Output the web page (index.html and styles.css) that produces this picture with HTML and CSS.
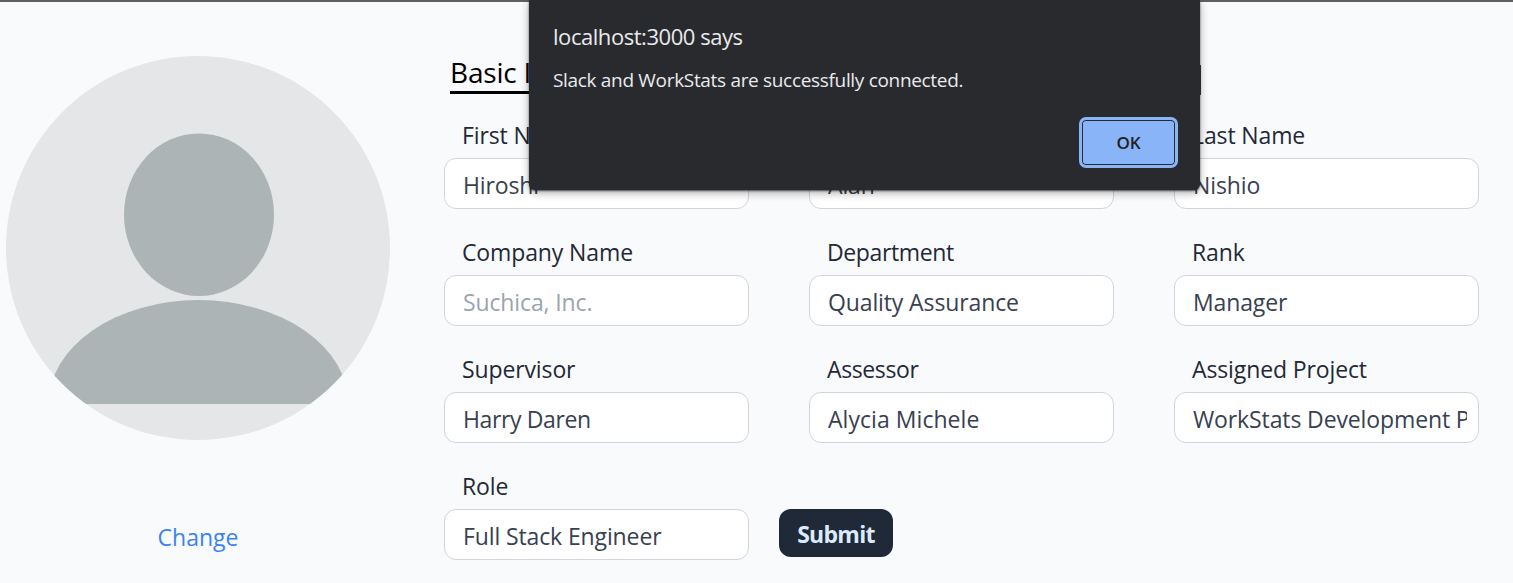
FILE: index.html
```
<!DOCTYPE html>
<html lang="en">
<head>
<meta charset="utf-8">
<title>Profile</title>
<link rel="stylesheet" href="styles.css">
</head>
<body>
<main class="page">
  <aside class="profile">
    <svg class="avatar" viewBox="0 0 384 384" aria-hidden="true">
      <defs><clipPath id="disc"><circle cx="192" cy="192" r="192"/></clipPath></defs>
      <g clip-path="url(#disc)">
        <rect width="384" height="384" fill="#e4e6e7"/>
        <ellipse cx="193" cy="158.700" rx="75" ry="81.300" fill="#acb4b6"/>
        <path d="M42.500 348A150 104 0 0 1 342.500 348Z" fill="#acb4b6"/>
      </g>
    </svg>
    <a class="change">Change</a>
  </aside>
  <section class="details">
    <h2 class="heading">Basic Information</h2>
    <form class="form">
      <div class="row">
        <label class="field"><span class="label">First Name</span><input class="input" value="Hiroshi"></label>
        <label class="field"><span class="label">Middle Name</span><input class="input" value="Alan"></label>
        <label class="field"><span class="label">Last Name</span><input class="input" value="Nishio"></label>
      </div>
      <div class="row">
        <label class="field"><span class="label">Company Name</span><input class="input" placeholder="Suchica, Inc."></label>
        <label class="field"><span class="label tight">Department</span><input class="input" value="Quality Assurance"></label>
        <label class="field"><span class="label">Rank</span><input class="input" value="Manager"></label>
      </div>
      <div class="row">
        <label class="field"><span class="label">Supervisor</span><input class="input tight" value="Harry Daren"></label>
        <label class="field"><span class="label tight">Assessor</span><input class="input loose" value="Alycia Michele"></label>
        <label class="field"><span class="label">Assigned Project</span><input class="input" value="WorkStats Development Project"></label>
      </div>
      <div class="row row-last">
        <label class="field"><span class="label">Role</span><input class="input" value="Full Stack Engineer"></label>
        <button class="submit" type="button">Submit</button>
      </div>
    </form>
  </section>
</main>
<div class="dialog" role="alertdialog">
  <div class="dialog-title">localhost:3000 says</div>
  <div class="dialog-text">Slack and WorkStats are successfully connected.</div>
  <button class="ok" type="button">OK</button>
</div>
</body>
</html>
```
FILE: styles.css
```
* { box-sizing: border-box; }
body {
  margin: 0;
  height: 583px;
  overflow: hidden;
  background: #f9fafc;
  color: #1f2937;
  font-family: "Open Sans", "Noto Sans", sans-serif;
  font-size: 23px;
}
.page {
  display: flex;
  height: 583px;
  border-top: 2px solid #5f6061;
}
.profile {
  width: 384px;
  margin: 54px 54px 0 6px;
  display: flex;
  flex-direction: column;
  align-items: center;
}
.avatar { display: block; width: 384px; height: 384px; }
.change { margin-top: 81px; line-height: 32px; color: #3b82f6; }
.details { padding-top: 52px; letter-spacing: -0.12px; }
.heading {
  width: fit-content;
  height: 40px;
  margin: 0 0 27px 6px;
  border-bottom: 3px solid #000;
  color: #000;
  font-size: 28px;
  font-weight: 400;
  letter-spacing: -0.2px;
  line-height: 37px;
}
.form { display: flex; flex-direction: column; gap: 29px; }
.row { display: flex; gap: 60px; }
.row-last { gap: 30px; align-items: flex-end; }
.field { display: block; width: 305px; }
.label { display: block; height: 37px; padding-left: 18px; line-height: 28px; }
.input {
  display: block;
  width: 305px;
  height: 51px;
  padding: 2px 11px 0 18px;
  border: 1px solid #d1d5db;
  border-radius: 12px;
  background: #fff;
  color: #374151;
  font: inherit;
  letter-spacing: inherit;
}
.input::placeholder { color: #9ca3af; opacity: 1; }
.tight { letter-spacing: -0.38px; }
.loose { letter-spacing: 0.05px; }
.submit {
  width: 114px;
  height: 48px;
  margin-bottom: 3px;
  padding: 2px 0 0;
  border: 0;
  border-radius: 12px;
  background: #1f2937;
  color: #dbeafe;
  font: 700 23px "Open Sans", sans-serif;
  letter-spacing: -0.7px;
}
.dialog {
  position: absolute;
  top: 0;
  left: 529px;
  width: 671px;
  height: 190px;
  padding: 19px 22px 22px 24px;
  display: flex;
  flex-direction: column;
  border-radius: 0 0 6px 6px;
  background: #292a2d;
  box-shadow: 0 1px 2px rgba(0,0,0,.6), 0 3px 9px rgba(0,0,0,.32);
  color: #e8eaed;
}
.dialog::after {
  content: "";
  position: absolute;
  top: 65px;
  left: 671px;
  width: 1px;
  height: 30px;
  background: #292a2d;
}
.dialog-title { font-size: 22px; line-height: 34px; letter-spacing: -0.45px; }
.dialog-text { margin-top: 12px; font-size: 19px; line-height: 30px; letter-spacing: -0.32px; }
.ok {
  width: 99px;
  height: 51px;
  margin: auto 0 0 auto;
  padding: 0;
  border: 3px solid #8ab4f8;
  border-radius: 7px;
  background: #8ab4f8;
  box-shadow: inset 0 0 0 1px #292a2d;
  color: #202124;
  font: 600 17px "Open Sans", sans-serif;
}
```
